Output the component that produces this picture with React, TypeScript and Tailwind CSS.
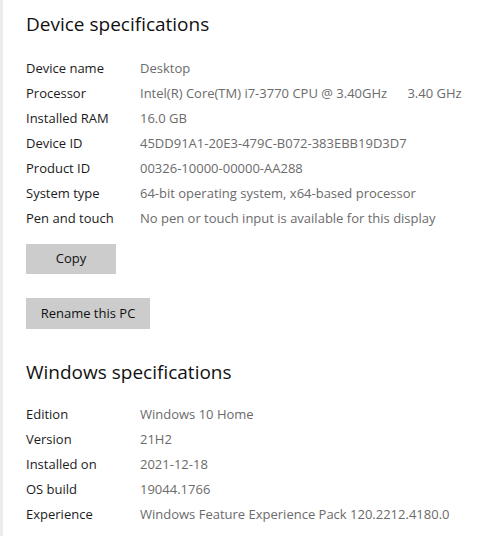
import React from 'react';

const deviceSpecs = [
  { label: 'Device name', value: 'Desktop' },
  { label: 'Processor', value: 'Intel(R) Core(TM) i7-3770 CPU @ 3.40GHz      3.40 GHz' },
  { label: 'Installed RAM', value: '16.0 GB' },
  { label: 'Device ID', value: '45DD91A1-20E3-479C-B072-383EBB19D3D7' },
  { label: 'Product ID', value: '00326-10000-00000-AA288' },
  { label: 'System type', value: '64-bit operating system, x64-based processor' },
  { label: 'Pen and touch', value: 'No pen or touch input is available for this display' },
];

const windowsSpecs = [
  { label: 'Edition', value: 'Windows 10 Home' },
  { label: 'Version', value: '21H2' },
  { label: 'Installed on', value: '2021-12-18' },
  { label: 'OS build', value: '19044.1766' },
  { label: 'Experience', value: 'Windows Feature Experience Pack 120.2212.4180.0' },
];

const SpecTable: React.FC<{ rows: { label: string; value: string }[] }> = ({ rows }) => (
  <div className="flex flex-col">
    {rows.map((row) => (
      <div key={row.label} className="grid grid-cols-[114px_1fr] h-[25px] items-center text-[13px]">
        <span className="text-[#1b1b1b]">{row.label}</span>
        <span className="text-[#6b6b6b] whitespace-pre">{row.value}</span>
      </div>
    ))}
  </div>
);

const App: React.FC = () => {
  return (
    <div
      className="w-[496px] h-[536px] bg-white flex overflow-hidden"
      style={{ fontFamily: '"Open Sans", "Noto Sans", sans-serif' }}
    >
      <div className="w-[3px] shrink-0 bg-[#ebebeb]" />
      <div className="flex flex-col pl-[23px] pt-[10px]">
        <h1 className="text-[19px] leading-[28px] text-[#111111] mb-[18px]">Device specifications</h1>
        <SpecTable rows={deviceSpecs} />

        <button className="mt-[13px] w-[90px] h-[30px] bg-[#cccccc] text-[13px] text-[#111111]">
          Copy
        </button>
        <button className="mt-[24px] w-[124px] h-[31px] bg-[#cccccc] text-[13px] text-[#111111]">
          Rename this PC
        </button>

        <h2 className="mt-[29px] text-[19px] leading-[28px] text-[#111111] mb-[16px]">Windows specifications</h2>
        <SpecTable rows={windowsSpecs} />
      </div>
    </div>
  );
};

export default App;
